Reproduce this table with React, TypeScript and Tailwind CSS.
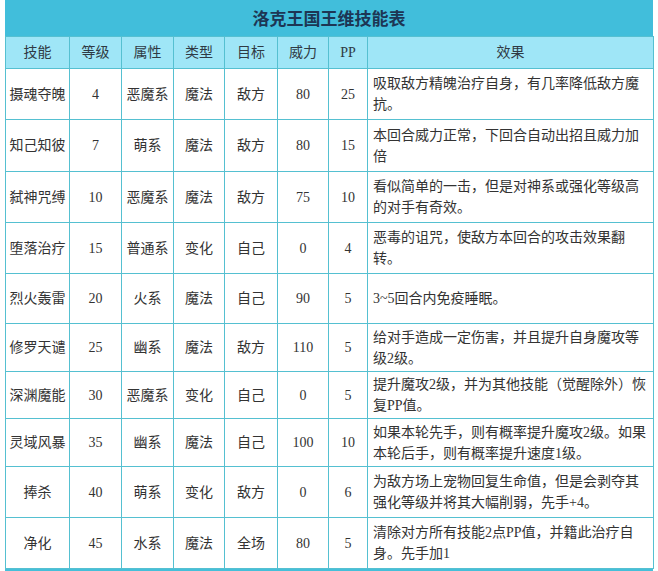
import React from "react";

type Row = {
  name: string;
  lv: string;
  attr: string;
  kind: string;
  target: string;
  power: string;
  pp: string;
  effect: string[];
  h: number;
};

const rows: Row[] = [
  { name: "摄魂夺魄", lv: "4", attr: "恶魔系", kind: "魔法", target: "敌方", power: "80", pp: "25", effect: ["吸取敌方精魄治疗自身，有几率降低敌方魔", "抗。"], h: 51 },
  { name: "知己知彼", lv: "7", attr: "萌系", kind: "魔法", target: "敌方", power: "80", pp: "15", effect: ["本回合威力正常，下回合自动出招且威力加", "倍"], h: 52 },
  { name: "弑神咒缚", lv: "10", attr: "恶魔系", kind: "魔法", target: "敌方", power: "75", pp: "10", effect: ["看似简单的一击，但是对神系或强化等级高", "的对手有奇效。"], h: 51 },
  { name: "堕落治疗", lv: "15", attr: "普通系", kind: "变化", target: "自己", power: "0", pp: "4", effect: ["恶毒的诅咒，使敌方本回合的攻击效果翻", "转。"], h: 51 },
  { name: "烈火轰雷", lv: "20", attr: "火系", kind: "魔法", target: "自己", power: "90", pp: "5", effect: ["3~5回合内免疫睡眠。"], h: 50 },
  { name: "修罗天谴", lv: "25", attr: "幽系", kind: "魔法", target: "敌方", power: "110", pp: "5", effect: ["给对手造成一定伤害，并且提升自身魔攻等", "级2级。"], h: 48 },
  { name: "深渊魔能", lv: "30", attr: "恶魔系", kind: "变化", target: "自己", power: "0", pp: "5", effect: ["提升魔攻2级，并为其他技能（觉醒除外）恢", "复PP值。"], h: 47 },
  { name: "灵域风暴", lv: "35", attr: "幽系", kind: "魔法", target: "自己", power: "100", pp: "10", effect: ["如果本轮先手，则有概率提升魔攻2级。如果", "本轮后手，则有概率提升速度1级。"], h: 48 },
  { name: "捧杀", lv: "40", attr: "萌系", kind: "变化", target: "敌方", power: "0", pp: "6", effect: ["为敌方场上宠物回复生命值，但是会剥夺其", "强化等级并将其大幅削弱，先手+4。"], h: 51 },
  { name: "净化", lv: "45", attr: "水系", kind: "魔法", target: "全场", power: "80", pp: "5", effect: ["清除对方所有技能2点PP值，并籍此治疗自", "身。先手加1"], h: 51 },
];

const headers = ["技能", "等级", "属性", "类型", "目标", "威力", "PP", "效果"];
const widths = [64, 52, 52, 51, 53, 51, 39, 286];

export default function App() {
  return (
    <div
      className="w-[658px] h-[571px] bg-white overflow-hidden text-[#333]"
      style={{ fontFamily: '"Liberation Serif", "Noto Sans CJK SC", serif' }}
    >
      <div className="ml-[5px] w-[648px]">
        <div className="h-[36px] bg-[#41bedb] flex items-center justify-center">
          <span
            className="text-[17px] font-bold text-[#1d3654] tracking-[0px]"
            style={{ fontFamily: '"Noto Sans CJK SC", sans-serif' }}
          >
            洛克王国王维技能表
          </span>
        </div>
        <table className="table-fixed border-collapse w-[648px] text-[14px] leading-[21px]">
          <colgroup>
            <col className="w-[64px]" />
            <col className="w-[52px]" />
            <col className="w-[52px]" />
            <col className="w-[51px]" />
            <col className="w-[53px]" />
            <col className="w-[51px]" />
            <col className="w-[39px]" />
            <col className="w-[286px]" />
          </colgroup>
          <thead>
            <tr className="h-[32px] bg-[#9fe6f7]">
              {headers.map((h, i) => (
                <th
                  key={h}
                  className="border border-[#55c0d1] font-normal text-center p-0 text-[#2f3a44]"
                  style={{ width: widths[i] }}
                >
                  {h}
                </th>
              ))}
            </tr>
          </thead>
          <tbody>
            {rows.map((r) => (
              <tr key={r.name} style={{ height: r.h }}>
                <td className="border border-[#55c0d1] text-center p-0">{r.name}</td>
                <td className="border border-[#55c0d1] text-center p-0">{r.lv}</td>
                <td className="border border-[#55c0d1] text-center p-0">{r.attr}</td>
                <td className="border border-[#55c0d1] text-center p-0">{r.kind}</td>
                <td className="border border-[#55c0d1] text-center p-0">{r.target}</td>
                <td className="border border-[#55c0d1] text-center p-0">{r.power}</td>
                <td className="border border-[#55c0d1] text-center p-0">{r.pp}</td>
                <td className="border border-[#55c0d1] text-left py-0 pl-[5px] pr-0">
                  {r.effect.map((l, i) => (
                    <div key={i} className="whitespace-nowrap">
                      {l}
                    </div>
                  ))}
                </td>
              </tr>
            ))}
          </tbody>
        </table>
        <div className="h-[3px] bg-[#45bfd9]" />
      </div>
    </div>
  );
}
